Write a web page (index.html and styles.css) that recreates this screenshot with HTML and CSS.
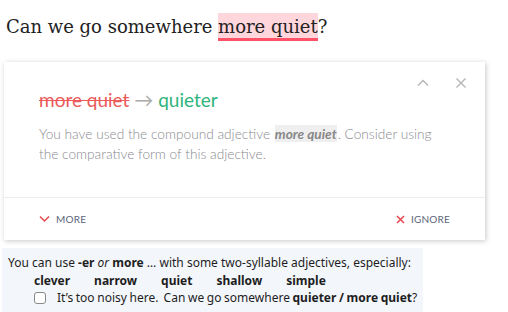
FILE: index.html
```html
<!DOCTYPE html>
<html lang="en">

<head>
    <meta charset="UTF-8">
    <meta name="viewport" content="width=device-width, initial-scale=1.0">
    <title>Document</title>
    <link rel="stylesheet" href="styles.css">
</head>

<body>
    <p class="sentence">Can we go somewhere <span class="mark">more quiet</span>?</p>

    <div class="card">
        <div class="tools">
            <svg class="ico" width="12" height="12" viewBox="0 0 12 12">
                <path d="M1 8.5 L6 3.5 L11 8.5" fill="none" stroke="#b4b4b4" stroke-width="1.3" />
            </svg>
            <svg class="ico" width="12" height="12" viewBox="0 0 12 12">
                <path d="M1.5 1.5 L10.5 10.5 M10.5 1.5 L1.5 10.5" fill="none" stroke="#b4b4b4" stroke-width="1.3" />
            </svg>
        </div>
        <div class="body">
            <div class="title"><span class="old">more quiet</span> <span class="arrow">&rarr;</span> <span class="new">quieter</span></div>
            <p class="desc">You have used the compound adjective <b>more quiet</b>. Consider using the comparative form of this adjective.</p>
        </div>
        <div class="foot">
            <a href="" class="btn">
                <svg width="11" height="8" viewBox="0 0 11 8">
                    <path d="M1 1.5 L5.5 6 L10 1.5" fill="none" stroke="#e8474f" stroke-width="1.5" />
                </svg>
                MORE
            </a>
            <a href="" class="btn">
                <svg width="9" height="9" viewBox="0 0 9 9">
                    <path d="M1 1 L8 8 M8 1 L1 8" fill="none" stroke="#e8474f" stroke-width="1.5" />
                </svg>
                IGNORE
            </a>
        </div>
    </div>

    <div class="note">
        <p>You can use <b>-er</b> <i>or</i> <b>more</b> &hellip; with some two-syllable adjectives, especially:</p>
        <ul class="words">
            <li>clever</li>
            <li>narrow</li>
            <li>quiet</li>
            <li>shallow</li>
            <li>simple</li>
        </ul>
        <p class="ex"><span class="box"></span>It&rsquo;s too noisy here.&nbsp; Can we go somewhere <b>quieter / more quiet</b>?</p>
    </div>
</body>

</html>
```

FILE: styles.css
```css
body {
    margin: 0;
    background: #fff;
}

.sentence {
    margin: 0;
    padding: 13px 0 0 6px;
    height: 49px;
    box-sizing: border-box;
    font-family: "DejaVu Serif", serif;
    font-size: 18px;
    line-height: 27px;
    color: #222;
}

.mark {
    background: #ffd6dc;
    border-bottom: 3px solid #ff5468;
    padding: 3px 0 1px;
}

.card {
    width: 481px;
    height: 178px;
    margin: 13px 0 0 4px;
    background: #fff;
    box-shadow: 1px 1px 5px rgba(0, 0, 0, 0.22);
    display: flex;
    flex-direction: column;
    font-family: Lato, sans-serif;
}

.tools {
    display: flex;
    justify-content: flex-end;
    gap: 26px;
    padding: 15px 18px 0 0;
    height: 12px;
}

.body {
    padding: 0 45px 0 35px;
    flex: 1;
}

.title {
    font-size: 19px;
    line-height: 22px;
}

.old {
    color: #ea5b5b;
    text-decoration: line-through;
}

.arrow {
    color: #aaa;
}

.new {
    color: #2fb47c;
}

.desc {
    margin: 13px 0 0;
    font-size: 13.7px;
    line-height: 20px;
    font-weight: 300;
    color: #8a8a8f;
}

.desc b {
    font-style: italic;
    font-weight: 700;
    color: #888;
    background: #efefef;
    margin: 0 1px;
}

.foot {
    border-top: 1px solid #ececec;
    height: 42px;
    display: flex;
    justify-content: space-between;
    align-items: center;
    padding: 0 35px 0 35px;
}

.btn {
    display: flex;
    align-items: center;
    gap: 6px;
    text-decoration: none;
    font-size: 10px;
    color: #5b6579;
    letter-spacing: 0.2px;
}

.note {
    width: 415px;
    margin: 8px 0 0 2px;
    padding: 6px 0 0 6px;
    height: 58px;
    background: #f3f6fb;
    font-family: "Noto Sans", sans-serif;
    font-size: 12px;
    line-height: 17px;
    color: #1e1e1e;
}

.note p {
    margin: 0;
}

.words {
    list-style: none;
    margin: 1px 0 0;
    padding: 0 0 0 26px;
    display: flex;
    gap: 24px;
    font-weight: 700;
}

.ex {
    padding-left: 26px;
    display: flex;
    align-items: center;
    white-space: pre;
    word-spacing: -0.5px;
}

.box {
    width: 10px;
    height: 10px;
    border: 1px solid #888;
    border-radius: 3px;
    margin-right: 11px;
    background: #fff;
}
```
